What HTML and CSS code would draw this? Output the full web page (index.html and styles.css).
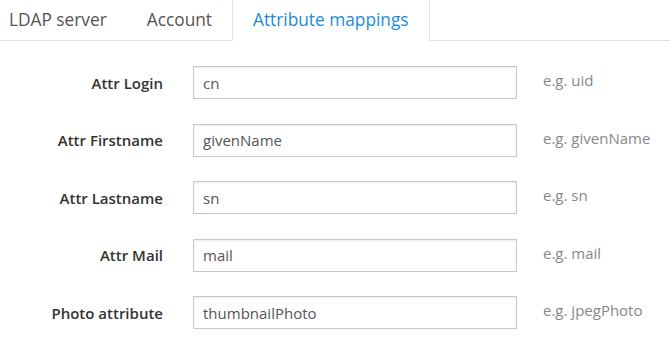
FILE: index.html
```html
<!DOCTYPE html>
<html lang="en">
<head>
    <meta charset="UTF-8">
    <meta name="viewport" content="width=device-width, initial-scale=1.0">
    <title>LDAP settings</title>
    <link rel="stylesheet" href="styles.css">
</head>
<body>
    <ul class="tabs">
        <li class="tab">LDAP server</li>
        <li class="tab">Account</li>
        <li class="tab active">Attribute mappings</li>
    </ul>

    <form class="mappings">
        <label class="field-label" for="attrLogin">Attr Login</label>
        <div class="field-input"><input type="text" id="attrLogin" value="cn"></div>
        <span class="field-hint">e.g. uid</span>

        <label class="field-label" for="attrFirstname">Attr Firstname</label>
        <div class="field-input"><input type="text" id="attrFirstname" value="givenName"></div>
        <span class="field-hint">e.g. givenName</span>

        <label class="field-label" for="attrLastname">Attr Lastname</label>
        <div class="field-input"><input type="text" id="attrLastname" value="sn"></div>
        <span class="field-hint">e.g. sn</span>

        <label class="field-label" for="attrMail">Attr Mail</label>
        <div class="field-input"><input type="text" id="attrMail" value="mail"></div>
        <span class="field-hint">e.g. mail</span>

        <label class="field-label" for="photoAttr">Photo attribute</label>
        <div class="field-input"><input type="text" id="photoAttr" value="thumbnailPhoto"></div>
        <span class="field-hint">e.g. jpegPhoto</span>
    </form>
</body>
</html>
```

FILE: styles.css
```css
body {
    margin: 0;
    font-family: 'Open Sans', sans-serif;
    background-color: #fff;
    color: #333;
}
.tabs {
    display: flex;
    list-style: none;
    margin: 0 0 0 -11px;
    padding: 0;
    height: 40px;
    border-bottom: 1px solid #e2e2e2;
}
.tab {
    padding: 8px 19px 0;
    font-size: 17.3px;
    line-height: 24px;
    color: #555;
    border: 1px solid transparent;
    border-top: none;
    margin-bottom: -1px;
}
.tab.active {
    padding: 8px 20px 0;
    color: #1c8bd8;
    background-color: #fff;
    border-color: #e2e2e2;
    border-bottom-color: #fff;
}
.mappings {
    display: grid;
    grid-template-columns: 163px 324px 1fr;
    grid-auto-rows: 33px;
    row-gap: 24.5px;
    margin-top: 25px;
}
.field-label {
    justify-self: end;
    align-self: center;
    font-size: 15px;
    font-weight: 600;
    color: #333;
}
.field-input {
    margin-left: 30px;
    width: 324px;
}
.field-input input {
    width: 100%;
    height: 33px;
    box-sizing: border-box;
    padding: 0 9px;
    font-family: 'Open Sans', sans-serif;
    font-size: 15px;
    color: #555;
    border: 1px solid #c8c8c8;
    border-radius: 0;
    box-shadow: inset 0 1px 2px rgba(0, 0, 0, 0.08);
    outline: none;
}
.field-hint {
    margin-left: 56px;
    padding-top: 4px;
    font-size: 15px;
    color: #888;
}
```
